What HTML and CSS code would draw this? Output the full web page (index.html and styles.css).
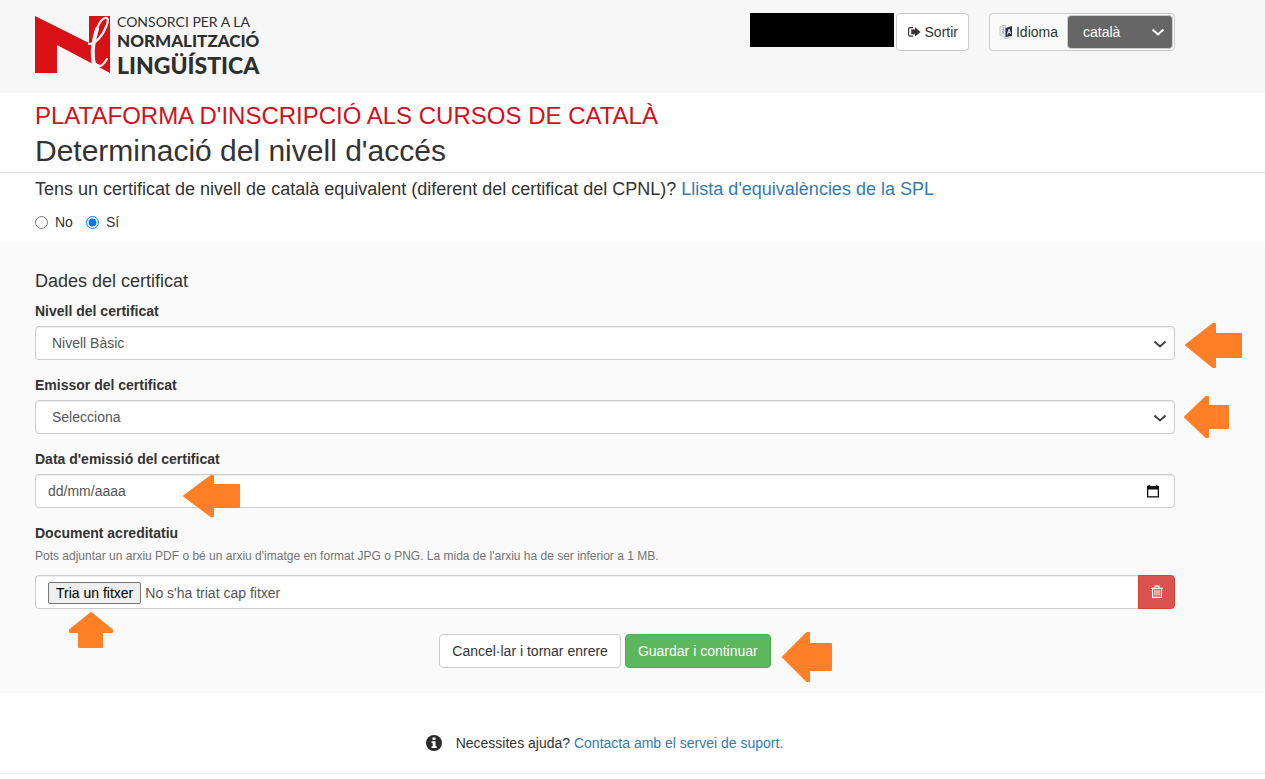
FILE: index.html
```html
<!DOCTYPE html>
<html lang="ca">

<head>
    <meta charset="UTF-8">
    <meta name="viewport" content="width=device-width, initial-scale=1.0">
    <title>Plataforma d'inscripció als cursos de català</title>
    <link rel="stylesheet" href="styles.css">
</head>

<body>
    <header class="top">
        <div class="container top-row">
            <a class="logo" href="#">
                <svg class="logo-mark" viewBox="0 0 75 57" aria-hidden="true">
                    <path fill="#d81116" d="M0 0 L54 27 V0 H75 V57 L22 29 V57 H0 Z" />
                    <path fill="none" stroke="#f7f7f7" stroke-width="2.2" stroke-linecap="round" d="M54 28 C61 28 68 19 71 11 C74 4 73 1 70 2 C66 3 62 11 60 18 M61 50 C65 52 69 48 72 43" />
                    <path fill="none" stroke="#f7f7f7" stroke-width="4" stroke-linecap="round" d="M62 13 C59 23 57 33 58 41 C58 47 60 50 63 50" />
                </svg>
                <span class="logo-text">
                    <span class="logo-small">CONSORCI PER A LA</span>
                    <span class="logo-medium">NORMALITZACIÓ</span>
                    <span class="logo-large">LINGÜÍSTICA</span>
                </span>
            </a>
            <div class="user">
                <div class="user-name"></div>
                <button type="button" class="btn btn-top">
                    <svg class="icon" viewBox="0 0 14 14" aria-hidden="true">
                        <path fill="none" stroke="#333" stroke-width="1.2" d="M6 2.600 H3 Q1.600 2.600 1.600 4 V9.800 Q1.600 11.200 3 11.200 H6" />
                        <path fill="#333" d="M8 2.200 L13.500 6.900 L8 11.600 V9.200 H4.200 V4.600 H8 Z" />
                    </svg>
                    Sortir
                </button>
                <div class="language">
                    <label for="idioma">
                        <svg class="icon" viewBox="0 0 14 14" aria-hidden="true">
                            <path fill="#f2f2f2" stroke="#bbb" stroke-width="0.8" d="M1 1.500 L7 3 V12 L1 10.500 Z" />
                            <path fill="none" stroke="#999" stroke-width="0.8" d="M2.500 4.500 L6 5.300 M4.500 3.500 C4.500 6 4 8 2.500 9 M3 6 L5.800 9.500 M3 1 Q5 0 7 1 M5 13 Q8 14 10 12.500" />
                            <path fill="#2b3442" d="M6.500 3 L13 1 V11 L6.500 12 Z" />
                            <path fill="none" stroke="#fff" stroke-width="0.9" d="M8.300 9.500 L10 4.300 L11.700 9 M9 7.700 L11 7.400" />
                        </svg>
                        Idioma
                    </label>
                    <select id="idioma">
                        <option>català</option>
                        <option>castellano</option>
                        <option>English</option>
                    </select>
                </div>
            </div>
        </div>
    </header>

    <main>
        <div class="titles">
            <div class="container">
                <h1>PLATAFORMA D'INSCRIPCIÓ ALS CURSOS DE CATALÀ</h1>
                <h2>Determinació del nivell d'accés</h2>
            </div>
        </div>

        <form>
            <div class="container question">
                <p>Tens un certificat de nivell de català equivalent (diferent del certificat del CPNL)? <a href="#">Llista d'equivalències de la SPL</a></p>
                <div class="radios">
                    <label><input type="radio" name="certificat" value="no">No</label>
                    <label><input type="radio" name="certificat" value="si" checked>Sí</label>
                </div>
            </div>

            <div class="details">
                <div class="container">
                    <h3>Dades del certificat</h3>

                    <div class="form-group">
                        <label for="nivell">Nivell del certificat</label>
                        <div class="field">
                            <select id="nivell" class="form-control">
                                <option>Nivell Bàsic</option>
                            </select>
                            <svg class="arrow arrow-level" viewBox="0 0 57 45" aria-hidden="true">
                                <path d="M1 22 L28 1 H30 V11 H56 V34 H30 V44 H28 Z" />
                            </svg>
                        </div>
                    </div>

                    <div class="form-group">
                        <label for="emissor">Emissor del certificat</label>
                        <div class="field">
                            <select id="emissor" class="form-control">
                                <option>Selecciona</option>
                            </select>
                            <svg class="arrow arrow-issuer" viewBox="0 0 45 42" aria-hidden="true">
                                <path d="M1 21 L22 1 H24 V10 H44 V32 H24 V41 H22 Z" />
                            </svg>
                        </div>
                    </div>

                    <div class="form-group">
                        <label for="data">Data d'emissió del certificat</label>
                        <div class="field">
                            <div class="form-control date-box">
                                <input type="text" id="data" placeholder="dd/mm/aaaa">
                                <button type="button" class="calendar" aria-label="Obre el calendari">
                                    <svg viewBox="0 0 12 13" aria-hidden="true">
                                        <path fill="#111" d="M0 1 H1.500 V0 H3 V1 H9 V0 H10.500 V1 H12 V12.500 H0 Z" />
                                        <path fill="#fff" d="M1.300 4.500 H10.700 V11.200 H1.300 Z" />
                                    </svg>
                                </button>
                            </div>
                            <svg class="arrow arrow-date" viewBox="0 0 57 42" aria-hidden="true">
                                <path d="M1 21 L28 1 H30 V10 H56 V32 H30 V41 H28 Z" />
                            </svg>
                        </div>
                    </div>

                    <div class="form-group">
                        <label for="document">Document acreditatiu</label>
                        <p class="help">Pots adjuntar un arxiu PDF o bé un arxiu d'imatge en format JPG o PNG. La mida de l'arxiu ha de ser inferior a 1 MB.</p>
                        <div class="field file-row">
                            <div class="form-control file-box">
                                <input type="file" id="document" class="file-input">
                                <label for="document" class="file-btn">Tria un fitxer</label>
                                <span>No s'ha triat cap fitxer</span>
                            </div>
                            <button type="button" class="btn-delete" aria-label="Esborra el fitxer">
                                <svg class="icon" viewBox="0 0 14 14" aria-hidden="true">
                                    <path fill="none" stroke="#fff" stroke-width="1.200" d="M5 2.500 V1.200 H9 V2.500 M1 3.300 H13 M2.600 4 V12.300 H11.400 V4" />
                                    <path fill="none" stroke="#fbe0c0" stroke-width="1.200" d="M5 4.800 V10.500 M7 4.800 V10.500 M9 4.800 V10.500" />
                                </svg>
                            </button>
                            <svg class="arrow arrow-file" viewBox="0 0 44 36" aria-hidden="true">
                                <path d="M22 1 L43 18 V20 H33 V35 H10 V20 H1 V18 Z" />
                            </svg>
                        </div>
                    </div>

                    <div class="actions">
                        <button type="button" class="btn">Cancel·lar i tornar enrere</button>
                        <div class="field">
                            <button type="submit" class="btn btn-success">Guardar i continuar</button>
                            <svg class="arrow arrow-save" viewBox="0 0 50 50" aria-hidden="true">
                                <path d="M1 25 L25 1 H27 V12 H49 V38 H27 V49 H25 Z" />
                            </svg>
                        </div>
                    </div>
                </div>
            </div>
        </form>
    </main>

    <footer>
        <svg class="info" viewBox="0 0 16 16" aria-hidden="true">
            <circle cx="8" cy="8" r="8" fill="#2b2b2b" />
            <path fill="#fff" d="M6.500 2.500 H9.500 V5 H6.500 Z M5.500 6.300 H9.500 V11.300 H10.700 V13 H5.500 V11.300 H6.700 V8 H5.500 Z" />
        </svg>
        <span>Necessites ajuda? <a href="#">Contacta amb el servei de suport.</a></span>
    </footer>
</body>

</html>
```
FILE: styles.css
```css
* {
    box-sizing: border-box;
}

body {
    margin: 0;
    background-color: #fff;
    color: #333;
    font-family: "Liberation Sans", Arial, sans-serif;
    font-size: 14px;
    line-height: 20px;
}

h1, h2, h3, p {
    margin: 0;
    font-weight: normal;
}

a {
    color: #337ab7;
    text-decoration: none;
}

input, select, button {
    font: inherit;
    color: inherit;
}

.container {
    padding: 0 90px 0 35px;
}

/* header */
.top {
    background-color: #f7f7f7;
    padding: 13px 0 18px;
}

.top-row {
    display: flex;
    justify-content: space-between;
    align-items: flex-start;
}

.logo {
    display: flex;
    gap: 7px;
    padding-top: 3px;
    color: #2d2f2f;
    font-family: Lato, sans-serif;
}

.logo-mark {
    width: 75px;
    height: 57px;
}

.logo-text {
    display: flex;
    flex-direction: column;
    white-space: nowrap;
}

.logo-small {
    font-size: 14px;
    line-height: 11px;
}

.logo-medium {
    font-size: 17px;
    font-weight: 900;
    line-height: 28px;
}

.logo-large {
    font-size: 23px;
    font-weight: 900;
    line-height: 20px;
}

.user {
    display: flex;
    align-items: flex-start;
}

.user-name {
    width: 144px;
    height: 34px;
    margin-right: 2px;
    background-color: #000;
}

.icon {
    width: 14px;
    height: 14px;
}

.btn {
    height: 34px;
    padding: 0 12px;
    background-color: #fff;
    border: 1px solid #ccc;
    border-radius: 4px;
    cursor: pointer;
}

.btn-top {
    display: flex;
    align-items: center;
    gap: 4px;
    height: 38px;
    padding: 0 10px;
}

.language {
    display: flex;
    align-items: center;
    height: 38px;
    margin-left: 20px;
    padding: 0 1px 0 9px;
    background-color: #fafafa;
    border: 1px solid #ccc;
    border-radius: 4px;
}

.language label {
    display: flex;
    align-items: center;
    gap: 3px;
    margin-right: 9px;
}

select {
    appearance: none;
    background-repeat: no-repeat;
    background-image: url("data:image/svg+xml,%3Csvg xmlns='http://www.w3.org/2000/svg' width='14' height='8'%3E%3Cpath d='M1.500 1.500 L7 6.500 L12.500 1.500' fill='none' stroke='%23444' stroke-width='2'/%3E%3C/svg%3E");
}

.language select {
    width: 106px;
    height: 34px;
    padding: 0 15px;
    color: #fff;
    background-color: #666;
    background-image: url("data:image/svg+xml,%3Csvg xmlns='http://www.w3.org/2000/svg' width='14' height='8'%3E%3Cpath d='M1.500 1.500 L7 6.500 L12.500 1.500' fill='none' stroke='%23fff' stroke-width='2'/%3E%3C/svg%3E");
    background-position: right 7px center;
    border: 1px solid #ccc;
    border-radius: 4px;
}

/* titles and question */
.titles {
    padding: 9px 0 5px;
    border-bottom: 1px solid #ddd;
}

h1 {
    color: #d0111b;
    font-size: 24px;
    line-height: 27px;
}

h2 {
    margin-top: 5px;
    font-size: 30px;
    line-height: 33px;
}

.question {
    padding-top: 6px;
    padding-bottom: 10px;
}

.question p {
    font-size: 18px;
}

.radios {
    display: flex;
    gap: 13px;
    margin-top: 13px;
}

.radios label {
    display: flex;
    align-items: center;
    gap: 7px;
}

.radios input {
    width: 13px;
    height: 13px;
    margin: 0;
}

/* certificate form */
.details {
    padding: 29px 0 25px;
    background-color: #fafafa;
}

h3 {
    margin-bottom: 10px;
    font-size: 18px;
}

.form-group {
    margin-bottom: 15px;
}

.form-group > label {
    display: block;
    margin-bottom: 5px;
    font-weight: bold;
}

.field {
    position: relative;
}

.form-control {
    display: block;
    width: 100%;
    height: 34px;
    padding: 0 12px;
    color: #555;
    background-color: #fff;
    border: 1px solid #ccc;
    border-radius: 4px;
    box-shadow: inset 0 1px 1px rgba(0, 0, 0, 0.075);
}

select.form-control {
    padding: 0 16px;
    background-position: right 7px top 13px;
}

.date-box {
    display: flex;
    align-items: center;
}

.date-box input {
    flex: 1;
    padding: 0;
    border: 0;
    outline: 0;
    background: none;
}

.date-box input::placeholder {
    color: #555;
}

.calendar {
    display: flex;
    padding: 0 3px;
    border: 0;
    background: none;
}

.calendar svg {
    width: 12px;
    height: 13px;
}

.help {
    margin-bottom: 10px;
    color: #737373;
    font-size: 12px;
    line-height: 17px;
}

.file-row {
    display: flex;
}

.file-box {
    display: flex;
    align-items: center;
    gap: 4px;
    padding-top: 2px;
    border-right: 0;
    border-radius: 4px 0 0 4px;
}

.file-input {
    position: absolute;
    width: 1px;
    height: 1px;
    opacity: 0;
}

.file-btn {
    padding: 0 7px;
    color: #000;
    background-color: #efefef;
    border: 1px solid #767676;
    border-radius: 2px;
}

.btn-delete {
    display: flex;
    align-items: center;
    justify-content: center;
    flex: none;
    width: 37px;
    padding: 0;
    background-color: #d9534f;
    border: 1px solid #d43f3a;
    border-radius: 0 4px 4px 0;
}

.actions {
    display: flex;
    justify-content: center;
    gap: 4px;
    margin-top: 25px;
}

.btn-success {
    color: #fff;
    background-color: #5cb85c;
    border-color: #4cae4c;
}

/* orange pointers drawn over the form */
.arrow {
    position: absolute;
    fill: #ff7f27;
    stroke: #ff7f27;
    stroke-width: 2px;
    stroke-linejoin: round;
    pointer-events: none;
}

.arrow-level {
    left: calc(100% + 10px);
    top: -3px;
    width: 57px;
    height: 45px;
}

.arrow-issuer {
    left: calc(100% + 9px);
    top: -4px;
    width: 45px;
    height: 42px;
}

.arrow-date {
    left: 148px;
    top: 1px;
    width: 57px;
    height: 42px;
}

.arrow-file {
    left: 34px;
    top: 37px;
    width: 44px;
    height: 36px;
}

.arrow-save {
    left: calc(100% + 11px);
    top: -2px;
    width: 50px;
    height: 50px;
}

/* footer */
footer {
    display: flex;
    align-items: center;
    justify-content: center;
    gap: 14px;
    padding: 40px 56px 20px 0;
    border-bottom: 1px solid #eee;
}

.info {
    width: 16px;
    height: 16px;
}
```
